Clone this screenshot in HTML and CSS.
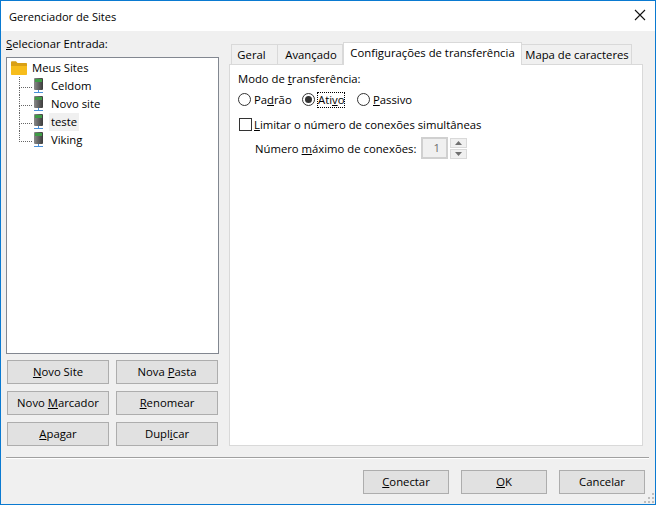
FILE: index.html

```html
<!DOCTYPE html>
<html lang="pt-BR">
<head>
  <meta charset="UTF-8" />
  <title>Gerenciador de Sites</title>
  <link rel="stylesheet" href="styles.css">
</head>
<body>
  <div class="window">
    <div class="titlebar">
      <span class="title">Gerenciador de Sites</span>
      <svg class="close" width="12" height="12" viewBox="0 0 12 12"><path d="M1 1l10 10M11 1L1 11" stroke="#111" stroke-width="1.1" fill="none"/></svg>
    </div>

    <div class="main">
      <div class="left">
        <div class="left-label"><u>S</u>elecionar Entrada:</div>
        <div class="tree">
          <div class="tree-root">
            <svg width="16" height="14" viewBox="0 0 16 14"><path d="M0 1.5C0 .7.5.3 1 .3h4l1.5 1.7H15c.6 0 1 .4 1 1v2H0z" fill="#d9a016"/><path d="M0 5h16v8c0 .6-.4 1-1 1H1c-.6 0-1-.4-1-1z" fill="#f7bd1c"/></svg>
            <span class="root-text">Meus Sites</span>
          </div>
          <ul class="tree-list">
            <li class="tree-item">
              <svg class="server" width="11" height="16" viewBox="0 0 11 16"><use href="#server-icon"/></svg>
              <span class="tree-text">Celdom</span>
            </li>
            <li class="tree-item">
              <svg class="server" width="11" height="16" viewBox="0 0 11 16"><use href="#server-icon"/></svg>
              <span class="tree-text">Novo site</span>
            </li>
            <li class="tree-item">
              <svg class="server" width="11" height="16" viewBox="0 0 11 16"><use href="#server-icon"/></svg>
              <span class="tree-text selected">teste</span>
            </li>
            <li class="tree-item">
              <svg class="server" width="11" height="16" viewBox="0 0 11 16"><use href="#server-icon"/></svg>
              <span class="tree-text">Viking</span>
            </li>
          </ul>
        </div>
        <div class="left-buttons">
          <button class="btn"><u>N</u>ovo Site</button>
          <button class="btn">Nova <u>P</u>asta</button>
          <button class="btn">Novo <u>M</u>arcador</button>
          <button class="btn"><u>R</u>enomear</button>
          <button class="btn"><u>A</u>pagar</button>
          <button class="btn">Dupl<u>i</u>car</button>
        </div>
      </div>

      <div class="right">
        <div class="tabs">
          <div class="tab tab-geral">Geral</div>
          <div class="tab tab-avancado">Avançado</div>
          <div class="tab active">Configurações de transferência</div>
          <div class="tab tab-mapa">Mapa de caracteres</div>
        </div>
        <div class="tab-page">
          <div class="group-label">Modo de <u>t</u>ransferência:</div>
          <div class="radios">
            <span class="option option-padrao"><i class="radio"></i><span>Pa<u>d</u>rão</span></span>
            <span class="option option-ativo"><i class="radio checked"></i><span class="focused">Ati<u>v</u>o</span></span>
            <span class="option"><i class="radio"></i><span><u>P</u>assivo</span></span>
          </div>
          <div class="limit"><i class="checkbox"></i><span><u>L</u>imitar o número de conexões simultâneas</span></div>
          <div class="max-row">
            <span class="max-label">Número <u>m</u>áximo de conexões:</span>
            <span class="spin-input">1</span>
            <span class="spin-buttons">
              <span class="spin-btn"><svg width="7" height="4" viewBox="0 0 7 4"><path d="M3.5 0L7 4H0z" fill="#707070"/></svg></span>
              <span class="spin-btn"><svg width="7" height="4" viewBox="0 0 7 4"><path d="M0 0h7L3.5 4z" fill="#707070"/></svg></span>
            </span>
          </div>
        </div>
      </div>
    </div>

    <div class="separator"></div>

    <div class="footer">
      <button class="btn wide"><u>C</u>onectar</button>
      <button class="btn wide"><u>O</u>K</button>
      <button class="btn wide">Cancelar</button>
    </div>
    <svg class="grip" width="11" height="11" viewBox="0 0 11 11"><path d="M8 0h2v2H8zM4 4h2v2H4zM8 4h2v2H8zM0 8h2v2H0zM4 8h2v2H4zM8 8h2v2H8z" fill="#bdbdbd"/></svg>
  </div>

  <svg width="0" height="0" class="defs">
    <defs>
      <linearGradient id="server-body" x1="0" x2="1" y1="0" y2="0">
        <stop offset="0" stop-color="#8a8a8a"/>
        <stop offset="1" stop-color="#3c3c3c"/>
      </linearGradient>
      <g id="server-icon">
        <rect x="1" y="0" width="9" height="12" rx="1" fill="url(#server-body)"/>
        <rect x="2" y="1" width="7" height="3" fill="#3f9c46"/>
        <rect x="5" y="12" width="1" height="3" fill="#4a90d9"/>
        <rect x="1" y="14" width="9" height="1" fill="#4a90d9"/>
      </g>
    </defs>
  </svg>
</body>
</html>
```

FILE: styles.css

```css
* {
  box-sizing: border-box;
}

html, body {
  margin: 0;
  height: 100%;
  overflow: hidden;
}

body {
  font-family: "Open Sans", "Noto Sans", sans-serif;
  font-size: 11.3px;
  color: #000;
  white-space: nowrap;
}

.defs {
  position: absolute;
}

.window {
  position: relative;
  width: 656px;
  height: 505px;
  background: #f0f0f0;
  border: 1px solid #0a7ad1;
  display: flex;
  flex-direction: column;
}

.titlebar {
  height: 30px;
  background: #fff;
  display: flex;
  align-items: center;
  justify-content: space-between;
  padding: 0 9px 0 8px;
}

.title {
  font-size: 11.1px;
}

.close {
  margin-bottom: 2px;
}

.main {
  display: flex;
  height: 415px;
  padding: 0 12px 0 5px;
  gap: 10px;
}

.left {
  width: 213px;
  flex: none;
  display: flex;
  flex-direction: column;
}

.left-label {
  height: 26px;
  line-height: 26px;
}

.tree {
  height: 297px;
  background: #fff;
  border: 1px solid #828790;
  padding: 1px 0 0 4px;
}

.tree-root {
  height: 18px;
  display: flex;
  align-items: center;
  gap: 5px;
}

.root-text {
  padding-bottom: 2px;
}

.tree-list {
  list-style: none;
  margin: 0;
  padding: 0;
}

.tree-item {
  position: relative;
  height: 18px;
  display: flex;
  align-items: center;
  padding-left: 22px;
}

/* dotted connectors */
.tree-item::before {
  content: "";
  position: absolute;
  left: 8px;
  top: 0;
  height: 10px;
  width: 12px;
  border-left: 1px dotted #666;
  border-bottom: 1px dotted #666;
}

.tree-item::after {
  content: "";
  position: absolute;
  left: 8px;
  top: 10px;
  height: 8px;
  border-left: 1px dotted #666;
}

.tree-item:last-child::after {
  display: none;
}

.tree-text {
  margin-left: 5px;
  padding: 0 2px;
  height: 18px;
  line-height: 18px;
}

.tree-text.selected {
  background: #f0f0f0;
}

.left-buttons {
  display: grid;
  grid-template-columns: 102px 102px;
  grid-auto-rows: 24px;
  column-gap: 7px;
  row-gap: 7px;
  padding: 6px 0 0 1px;
}

.btn {
  font: inherit;
  color: #000;
  background: #e1e1e1;
  border: 1px solid #adadad;
  padding: 0 0 2px;
  height: 24px;
}

.right {
  width: 414px;
  margin-top: 11px;
  height: 404px;
  display: flex;
  flex-direction: column;
}

.tabs {
  display: flex;
  align-items: flex-end;
  height: 22px;
  padding-left: 2px;
}

.tab {
  height: 20px;
  background: #f0f0f0;
  border: 1px solid #d9d9d9;
  border-bottom: 0;
  border-left: 0;
  line-height: 19px;
  text-align: center;
}

.tab-geral {
  width: 47px;
  padding-right: 6px;
  border-left: 1px solid #d9d9d9;
}

.tab-avancado {
  width: 65px;
  padding-left: 2px;
}

.tab-mapa {
  width: 110px;
  padding-left: 1px;
}

.tab.active {
  position: relative;
  width: 179px;
  height: 23px;
  margin-bottom: -1px;
  background: #fff;
  border-left: 1px solid #d9d9d9;
  line-height: 20px;
  z-index: 1;
}

.tab-page {
  flex: 1;
  background: #fff;
  border: 1px solid #d9d9d9;
  padding: 5px 8px;
}

.group-label {
  height: 17px;
  line-height: 17px;
}

.radios {
  display: flex;
  align-items: center;
  height: 19px;
  margin-top: 3px;
}

.option {
  display: flex;
  align-items: center;
  gap: 3px;
}

.option > span {
  line-height: 15px;
  padding-bottom: 1px;
}

.option-padrao {
  width: 64px;
}

.option-ativo {
  width: 55px;
}

.option > .focused {
  outline: 1px dotted #000;
  outline-offset: -1px;
  padding: 0 1px 1px;
  margin-left: -1px;
}

.radio {
  display: block;
  position: relative;
  width: 13px;
  height: 13px;
  border: 1px solid #333;
  border-radius: 50%;
  background: #fff;
}

.radio.checked::after {
  content: "";
  position: absolute;
  left: 2px;
  top: 2px;
  width: 7px;
  height: 7px;
  border-radius: 50%;
  background: #333;
}

.limit {
  display: flex;
  align-items: center;
  gap: 2px;
  height: 19px;
  margin-top: 6px;
  padding-left: 1px;
}

.limit span {
  padding-bottom: 1px;
}

.checkbox {
  display: block;
  width: 13px;
  height: 13px;
  border: 1px solid #333;
  background: #fff;
}

.max-row {
  display: flex;
  align-items: center;
  height: 22px;
  margin-top: 3px;
  padding-left: 17px;
}

.max-label {
  width: 166px;
}

.spin-input {
  width: 27px;
  height: 22px;
  border: 2px solid #d0d0d0;
  background: #f0f0f0;
  color: #6d6d6d;
  text-align: right;
  padding-right: 6px;
  line-height: 18px;
}

.spin-buttons {
  display: flex;
  flex-direction: column;
  gap: 1px;
  margin: 1px 0 0 2px;
  width: 17px;
}

.spin-btn {
  height: 10px;
  background: #f0f0f0;
  border: 1px solid #d9d9d9;
  display: flex;
  align-items: center;
  justify-content: center;
}

.separator {
  height: 2px;
  margin: 11px 6px 0 5px;
  background: #a0a0a0;
  border-bottom: 1px solid #fff;
}

.footer {
  display: flex;
  justify-content: flex-end;
  gap: 12px;
  padding: 11px 10px 0 0;
}

.btn.wide {
  width: 86px;
}

.grip {
  position: absolute;
  right: 0;
  bottom: 0;
}
```
